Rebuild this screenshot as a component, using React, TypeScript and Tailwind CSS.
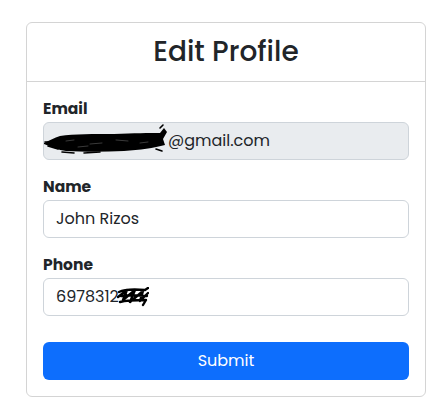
import React from "react"

// scribble used to hide part of the email
function EmailScribble() {
    return (
        <svg width="124" height="36" viewBox="0 0 124 36" className="shrink-0">
            <path
                d="M0 20 C6 17 10 15 16 13 C30 11 50 11 70 11 C90 10 105 10 116 10 L120 5 L123 9 L119 16 L121 22 C110 25 96 27 80 28 C60 29 40 29 22 28 C14 27 8 24 0 21 Z"
                fill="#000"
            />
            <path
                d="M4 23 L14 26 M18 29 L30 30 M40 30 L56 29 M112 26 L118 28 M116 5 L119 2 M1 19 L10 19"
                fill="none"
                stroke="#000"
                strokeWidth={1.6}
                strokeLinecap="round"
            />
            <path
                d="M22 18 L30 17 M46 21 L58 20 M72 17 L84 18 M96 20 L104 19 M34 24 L44 23"
                fill="none"
                stroke="#3a3a3a"
                strokeWidth={1}
                strokeLinecap="round"
            />
        </svg>
    )
}

function PhoneScribble() {
    return (
        <svg width="32" height="20" viewBox="0 0 32 20" className="shrink-0 -ml-[2px]">
            <path
                d="M2 5 C8 2 16 2 28 3 L31 1 M1 10 L10 3 L6 13 L18 3 L13 15 L26 4 L23 14 L31 6 M3 15 C10 13 18 13 29 13 L26 18 M4 9 C12 8 20 8 30 9"
                fill="none"
                stroke="#000"
                strokeWidth={2.4}
                strokeLinecap="round"
                strokeLinejoin="round"
            />
        </svg>
    )
}

export default function App() {
    const font = { fontFamily: '"Poppins", "Open Sans", sans-serif' }

    return (
        <div className="min-h-[409px] bg-white pl-[26px] pt-[22px] text-[#212529]" style={font}>
            <div className="w-[400px] rounded-[6px] border border-[#d4d4d4]">
                {/* Header */}
                <div className="border-b border-[#d4d4d4] px-4 py-2 text-center">
                    <h2 className="text-[28px] leading-[42px] font-medium">Edit Profile</h2>
                </div>

                {/* Body */}
                <form className="p-4">
                    <div className="mb-4">
                        <label className="mb-[2px] block text-[15.5px] leading-[22px] font-bold">Email</label>
                        <div className="flex h-[38px] items-center rounded-[6px] border border-[#ced4da] bg-[#e9ecef] text-[16px]">
                            <EmailScribble />
                            <span>@gmail.com</span>
                        </div>
                    </div>

                    <div className="mb-4">
                        <label className="mb-[2px] block text-[15.5px] leading-[22px] font-bold">Name</label>
                        <div className="flex h-[38px] items-center rounded-[6px] border border-[#ced4da] bg-white px-3 text-[16px]">
                            John Rizos
                        </div>
                    </div>

                    <div className="mb-[26px]">
                        <label className="mb-[2px] block text-[15.5px] leading-[22px] font-bold">Phone</label>
                        <div className="flex h-[38px] items-center rounded-[6px] border border-[#ced4da] bg-white px-3 text-[16px]">
                            <span>6978312</span>
                            <PhoneScribble />
                        </div>
                    </div>

                    <button
                        type="button"
                        className="block h-[38px] w-full rounded-[6px] bg-[#0d6efd] text-[16px] text-white"
                    >
                        Submit
                    </button>
                </form>
            </div>
        </div>
    )
}
